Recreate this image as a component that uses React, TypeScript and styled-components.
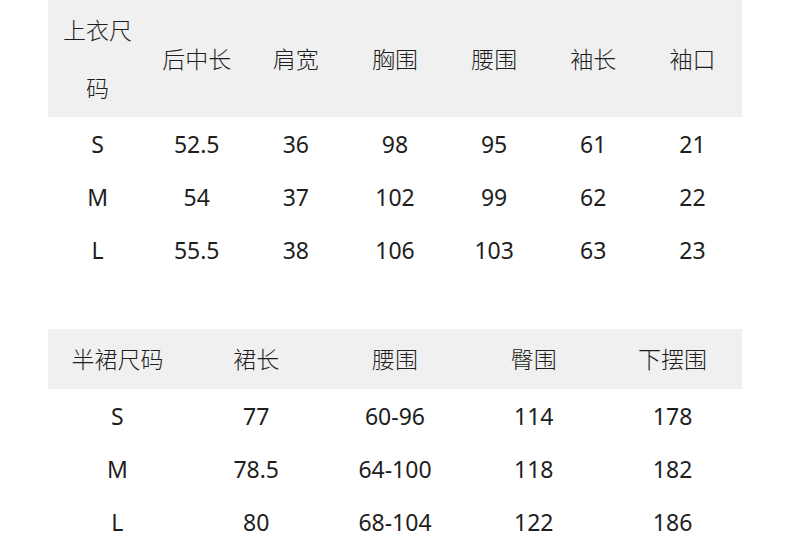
import { FC } from 'react';
import styled, { createGlobalStyle } from 'styled-components';

const GlobalStyle = createGlobalStyle`
    body {
        margin: 0;
        background: #ffffff;
        font-family: 'Noto Sans', 'Noto Sans CJK SC', sans-serif;
        color: #1e1e1e;
    }
`;

interface SizeTableProps {
    headers: string[];
    rows: string[][];
    headHeight: number;
}

const SizeTable: FC<SizeTableProps> = (props) => {
    const cols = props.headers.length;
    return (
        <Grid $cols={cols} $head={props.headHeight}>
            {props.headers.map((h) => (
                <HeadCell key={h}>{h}</HeadCell>
            ))}
            {props.rows.map((row) =>
                row.map((v, i) => <Cell key={`${row[0]}-${i}`}>{v}</Cell>),
            )}
        </Grid>
    );
};

const App: FC = () => {
    return (
        <Page>
            <GlobalStyle />
            <SizeTable
                headHeight={117}
                headers={['上衣尺码', '后中长', '肩宽', '胸围', '腰围', '袖长', '袖口']}
                rows={[
                    ['S', '52.5', '36', '98', '95', '61', '21'],
                    ['M', '54', '37', '102', '99', '62', '22'],
                    ['L', '55.5', '38', '106', '103', '63', '23'],
                ]}
            />
            <SizeTable
                headHeight={60}
                headers={['半裙尺码', '裙长', '腰围', '臀围', '下摆围']}
                rows={[
                    ['S', '77', '60-96', '114', '178'],
                    ['M', '78.5', '64-100', '118', '182'],
                    ['L', '80', '68-104', '122', '186'],
                ]}
            />
        </Page>
    );
};

const Page = styled.div`
    width: 694px;
    padding-left: 48px;
    display: flex;
    flex-direction: column;
    gap: 53px;
`;

const Grid = styled.div<{ $cols: number; $head: number }>`
    display: grid;
    grid-template-columns: repeat(${(p) => p.$cols}, 1fr);
    grid-template-rows: ${(p) => p.$head}px;
    grid-auto-rows: 53px;
`;

const HeadCell = styled.div`
    background: #f0f0f0;
    display: flex;
    align-items: center;
    justify-content: center;
    text-align: center;
    padding: 0 10px;
    font-size: 23px;
    font-weight: 300;
    line-height: 58px;
`;

const Cell = styled.div`
    display: flex;
    align-items: center;
    justify-content: center;
    font-size: 23px;
    font-weight: 400;
`;

export default App;
